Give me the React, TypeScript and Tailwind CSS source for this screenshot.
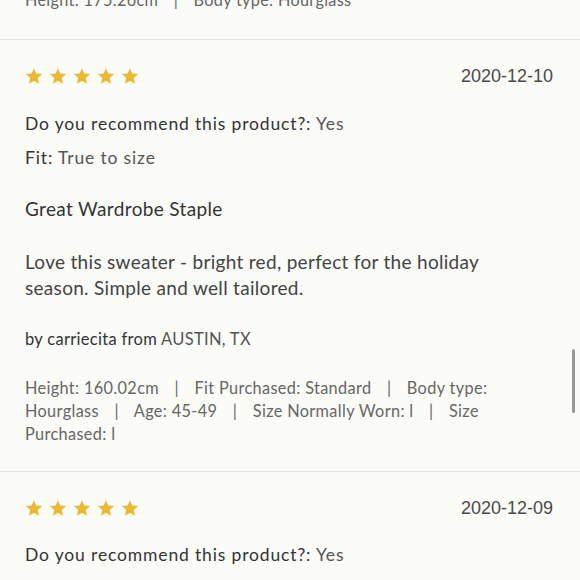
import React from "react";

const Star = () => (
  <svg width="18" height="18" viewBox="0 0 24 24" className="block">
    <path
      d="M12 1.5l3.09 7.26 7.86.68-5.96 5.17 1.79 7.69L12 18.25 5.22 22.3l1.79-7.69L1.05 9.44l7.86-.68z"
      fill="#ebb833"
    />
  </svg>
);

const Stars = () => (
  <div className="flex gap-[6px]">
    <Star />
    <Star />
    <Star />
    <Star />
    <Star />
  </div>
);

const Sep = () => <span className="mx-[11px]">|</span>;

export default function App() {
  const font = { fontFamily: "Lato, 'Open Sans', sans-serif" };
  const dateFont = { fontFamily: "'Liberation Sans', Arial, sans-serif" };
  return (
    <div
      className="w-[580px] h-[580px] overflow-hidden bg-[#fbfbf8] relative"
      style={font}
    >
      <div className="mt-[-12px] px-[25px] pb-[28px] text-[16.3px] leading-[23px] text-[#666] tracking-[0.3px]">
        Height: 175.26cm <Sep /> Body type: Hourglass
      </div>
      <div className="border-t border-[#e3e3de]" />
      <div className="px-[25px] pt-[24px] pb-[26px]">
        <div className="flex items-center justify-between h-[24px]">
          <Stars />
          <span className="text-[18px] text-[#4a4a4a] mr-[2px]" style={dateFont}>
            2020-12-10
          </span>
        </div>
        <div className="mt-[24px] text-[17.5px] leading-[24px] tracking-[0.85px] text-[#333]">
          Do you recommend this product?: <span className="text-[#555]">Yes</span>
        </div>
        <div className="mt-[10px] text-[17.5px] leading-[24px] tracking-[0.85px] text-[#555]">
          <span className="text-[#333]">Fit:</span> True to size
        </div>
        <div className="mt-[26px] text-[19px] leading-[26px] tracking-[0.35px] text-[#333]">
          Great Wardrobe Staple
        </div>
        <div className="mt-[27px] text-[19px] leading-[26px] tracking-[0.3px] text-[#444] pr-[20px]">
          Love this sweater - bright red, perfect for the holiday season. Simple and well tailored.
        </div>
        <div className="mt-[26px] text-[16.5px] leading-[24px] tracking-[0.3px] text-[#333]">
          by carriecita from <span className="text-[#555]">AUSTIN, TX</span>
        </div>
        <div className="mt-[25px] text-[16.3px] leading-[23px] tracking-[0.35px] text-[#666] pr-[15px]">
          Height: 160.02cm <Sep /> Fit Purchased: Standard <Sep /> Body type: Hourglass <Sep /> Age: 45-49 <Sep /> Size Normally Worn: l <Sep /> Size Purchased: l
        </div>
      </div>
      <div className="border-t border-[#e3e3de]" />
      <div className="px-[25px] pt-[24px]">
        <div className="flex items-center justify-between h-[24px]">
          <Stars />
          <span className="text-[18px] text-[#4a4a4a] mr-[2px]" style={dateFont}>
            2020-12-09
          </span>
        </div>
        <div className="mt-[23px] text-[17.5px] leading-[24px] tracking-[0.85px] text-[#333]">
          Do you recommend this product?: <span className="text-[#555]">Yes</span>
        </div>
      </div>
      <div className="absolute right-[5px] top-[349px] w-[3px] h-[64px] rounded-full bg-[#9a9a9a]" />
    </div>
  );
}
